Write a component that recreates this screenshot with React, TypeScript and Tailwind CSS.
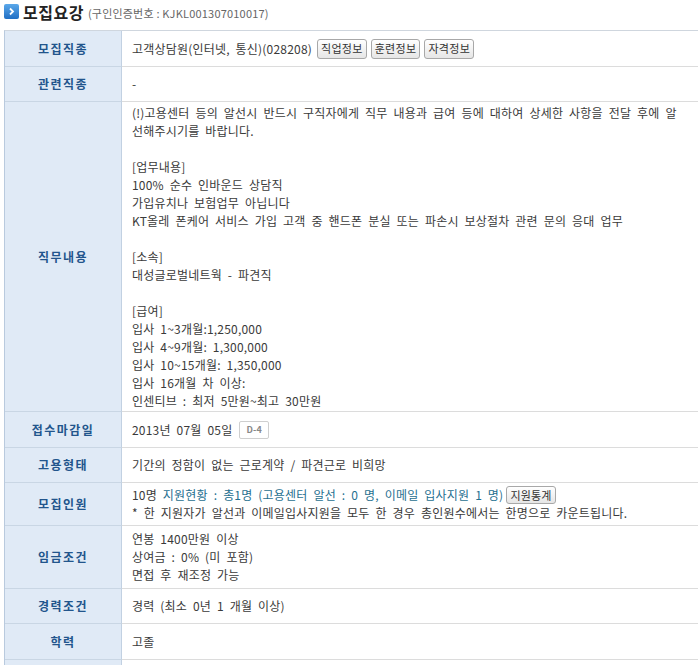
import React from 'react';

const font = { fontFamily: '"Noto Sans CJK KR", "Noto Sans", sans-serif' };

function InfoButton({ children }: { children: React.ReactNode }) {
  return (
    <span className="inline-flex h-[20px] items-center rounded-[3px] border border-[#a8a8a8] bg-gradient-to-b from-white to-[#e6e6e6] px-[3px] text-[11px] leading-none tracking-[0.3px] text-[#333]">
      {children}
    </span>
  );
}

function Row({
  label,
  h,
  children,
}: {
  label: string;
  h: string;
  children: React.ReactNode;
}) {
  return (
    <div className={`grid grid-cols-[117px_1fr] ${h}`}>
      <div className="flex items-center justify-center border-b border-r border-b-[#c9d6e4] border-r-[#c2d1e2] bg-[#e0eaf6] text-[12px] font-bold tracking-[1.5px] text-[#22558c]">
        {label}
      </div>
      <div className="flex items-center border-b border-[#dcdcdc] pl-[10px] text-[12px] leading-[18px] tracking-[0.2px] text-[#3a3a3a] [word-spacing:3px]">
        {children}
      </div>
    </div>
  );
}

export default function App() {
  return (
    <div className="min-h-[665px] w-[698px] bg-white" style={font}>
      {/* 제목 */}
      <div className="flex h-[30px] items-start gap-[4px] pl-[4px] pt-[3px]">
        <span className="mt-[1px] flex h-[15px] w-[15px] items-center justify-center rounded-[2px] bg-gradient-to-b from-[#5aa8ea] to-[#1f6fc4]">
          <svg width="9" height="9" viewBox="0 0 9 9">
            <path d="M3 1.5 L6 4.5 L3 7.5" fill="none" stroke="white" strokeWidth="1.8" />
          </svg>
        </span>
        <span className="text-[16px] font-bold leading-[18px] tracking-[0.5px] text-[#222]">모집요강</span>
        <span className="mt-[3px] text-[11px] leading-[14px] tracking-[0.2px] text-[#666]">
          (구인인증번호 : KJKL001307010017)
        </span>
      </div>

      <div className="ml-[4px] border-l border-t border-l-[#b9cade] border-t-[#cfd6de]">
        <Row label="모집직종" h="h-[36px]">
          <span>고객상담원(인터넷, 통신)(028208)</span>
          <span className="ml-[5px] flex gap-[4px] [word-spacing:0px]">
            <InfoButton>직업정보</InfoButton>
            <InfoButton>훈련정보</InfoButton>
            <InfoButton>자격정보</InfoButton>
          </span>
        </Row>
        <Row label="관련직종" h="h-[35px]">
          -
        </Row>
        <Row label="직무내용" h="h-[310px]">
          <div>
            (!)고용센터 등의 알선시 반드시 구직자에게 직무 내용과 급여 등에 대하여 상세한 사항을 전달 후에 알
            <br />
            선해주시기를 바랍니다.
            <br />
            <br />
            [업무내용]
            <br />
            100% 순수 인바운드 상담직
            <br />
            가입유치나 보험업무 아닙니다
            <br />
            KT올레 폰케어 서비스 가입 고객 중 핸드폰 분실 또는 파손시 보상절차 관련 문의 응대 업무
            <br />
            <br />
            [소속]
            <br />
            대성글로벌네트웍 - 파견직
            <br />
            <br />
            [급여]
            <br />
            입사 1~3개월:1,250,000
            <br />
            입사 4~9개월: 1,300,000
            <br />
            입사 10~15개월: 1,350,000
            <br />
            입사 16개월 차 이상:
            <br />
            인센티브 : 최저 5만원~최고 30만원
          </div>
        </Row>
        <Row label="접수마감일" h="h-[36px]">
          <span>2013년 07월 05일</span>
          <span className="ml-[7px] inline-flex h-[18px] items-center rounded-[2px] border border-[#cfcfcf] px-[6px] text-[9px] font-bold text-[#888]">
            D-4
          </span>
        </Row>
        <Row label="고용형태" h="h-[35px]">
          기간의 정함이 없는 근로계약 / 파견근로 비희망
        </Row>
        <Row label="모집인원" h="h-[43px]">
          <div>
            <div className="flex items-center">
              <span>10명&nbsp;</span>
              <span className="text-[#1f7090]">지원현황 : 총1명 (고용센터 알선 : 0 명, 이메일 입사지원 1 명)</span>
              <span className="ml-[3px] inline-flex h-[18px] items-center rounded-[3px] border border-[#a8a8a8] bg-gradient-to-b from-white to-[#e6e6e6] px-[3px] text-[11px] leading-none text-[#333]">
                지원통계
              </span>
            </div>
            <div>* 한 지원자가 알선과 이메일입사지원을 모두 한 경우 총인원수에서는 한명으로 카운트됩니다.</div>
          </div>
        </Row>
        <Row label="임금조건" h="h-[63px]">
          <div>
            연봉 1400만원 이상
            <br />
            상여금 : 0% (미 포함)
            <br />
            면접 후 재조정 가능
          </div>
        </Row>
        <Row label="경력조건" h="h-[35px]">
          경력 (최소 0년 1 개월 이상)
        </Row>
        <Row label="학력" h="h-[36px]">
          고졸
        </Row>
        <Row label="" h="h-[35px]">
          {''}
        </Row>
      </div>
    </div>
  );
}
